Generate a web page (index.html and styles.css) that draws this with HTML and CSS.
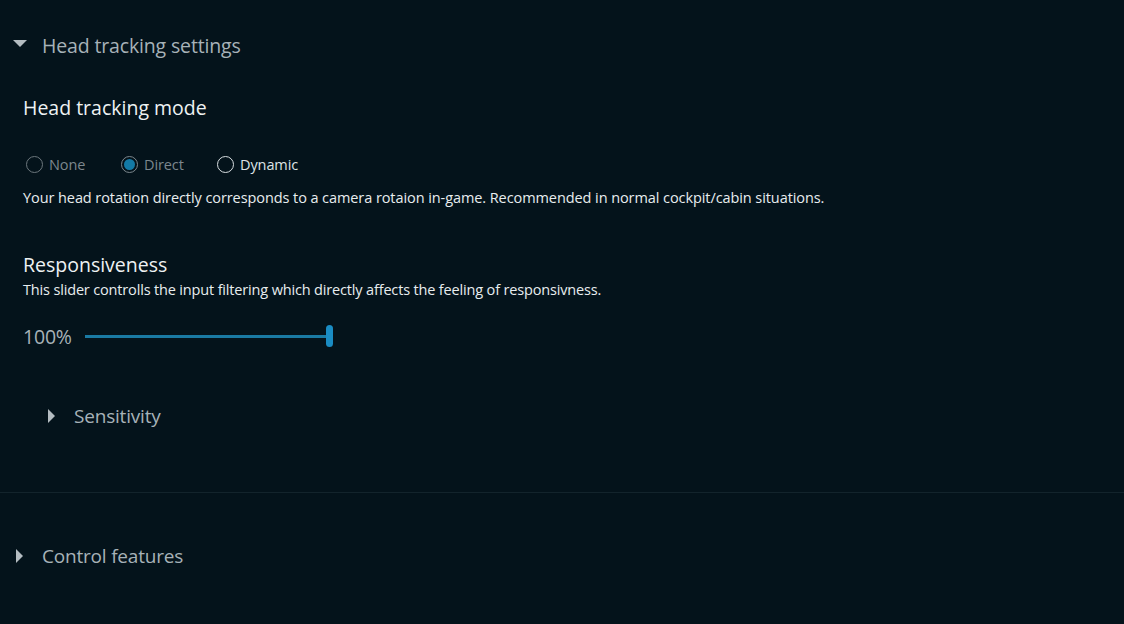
FILE: index.html
```html
<!DOCTYPE html>
<html>
<head>
<meta charset="utf-8">
<link rel="stylesheet" href="styles.css">
</head>
<body>
<div class="page">
  <section class="group">
    <div class="expander">
      <span class="tri tri-down"></span>
      <span class="exp-title">Head tracking settings</span>
    </div>
    <div class="content">
      <h2 class="heading mode-heading">Head tracking mode</h2>
      <div class="radios">
        <label class="radio disabled"><span class="circle"></span><span>None</span></label>
        <label class="radio disabled checked"><span class="circle"><span class="dot"></span></span><span>Direct</span></label>
        <label class="radio"><span class="circle"></span><span>Dynamic</span></label>
      </div>
      <p class="desc">Your head rotation directly corresponds to a camera rotaion in-game. Recommended in normal cockpit/cabin situations.</p>
      <h2 class="heading resp-heading">Responsiveness</h2>
      <p class="desc small">This slider controlls the input filtering which directly affects the feeling of responsivness.</p>
      <div class="slider-row">
        <span class="value">100%</span>
        <div class="slider">
          <div class="track"></div>
          <div class="thumb"></div>
        </div>
      </div>
      <div class="expander sub">
        <span class="tri tri-right"></span>
        <span class="exp-title">Sensitivity</span>
      </div>
    </div>
  </section>
  <div class="separator"></div>
  <section class="group">
    <div class="expander collapsed">
      <span class="tri tri-right"></span>
      <span class="exp-title">Control features</span>
    </div>
  </section>
</div>
</body>
</html>
```

FILE: styles.css
```css
html, body {
  margin: 0;
  padding: 0;
  background: #04131b;
  height: 100%;
}
body {
  font-family: "Open Sans", "Noto Sans", sans-serif;
  color: #e4eaec;
  overflow: hidden;
}
.page {
  display: flex;
  flex-direction: column;
}
.expander {
  display: flex;
  align-items: center;
  height: 30px;
  margin-top: 30px;
  padding-left: 13px;
}
.exp-title {
  font-size: 19.5px;
  color: #a7b2b8;
  letter-spacing: -0.15px;
}
.tri {
  display: inline-block;
  width: 0;
  height: 0;
}
.tri-down {
  border-left: 7px solid transparent;
  border-right: 7px solid transparent;
  border-top: 7px solid #b4bcc1;
  margin-right: 15px;
  margin-top: -4px;
}
.tri-right {
  border-top: 7px solid transparent;
  border-bottom: 7px solid transparent;
  border-left: 7px solid #b4bcc1;
  margin-left: 3px;
  margin-right: 19px;
}
.content {
  padding-left: 23px;
  display: flex;
  flex-direction: column;
}
.heading {
  font-weight: 400;
  font-size: 19.5px;
  color: #eef2f3;
  margin: 0;
  letter-spacing: 0;
}
.mode-heading {
  margin-top: 34px;
  line-height: 28px;
}
.radios {
  display: flex;
  margin-top: 30px;
  height: 24px;
  align-items: center;
}
.radio {
  display: flex;
  align-items: center;
  font-size: 14.5px;
  color: #dde3e6;
  letter-spacing: -0.1px;
}
.radio.disabled {
  color: #7c878d;
}
.radio:nth-child(1) { width: 95px; }
.radio:nth-child(2) { width: 96px; }
.circle {
  width: 15px;
  height: 15px;
  border: 1.5px solid #d8dee1;
  border-radius: 50%;
  margin-left: 3px;
  margin-right: 6px;
  display: flex;
  align-items: center;
  justify-content: center;
}
.radio.disabled .circle {
  border-color: #6c777d;
}
.radio.checked .circle {
  border-color: #7c878d;
}
.dot {
  width: 11px;
  height: 11px;
  border-radius: 50%;
  background: #137aa6;
}
.desc {
  margin: 0;
  margin-top: 12px;
  font-size: 14.5px;
  line-height: 20px;
  color: #e8edef;
  letter-spacing: -0.08px;
}
.resp-heading {
  margin-top: 44px;
  line-height: 26px;
}
.desc.small {
  margin-top: 2px;
  font-size: 14.5px;
  letter-spacing: -0.16px;
}
.slider-row {
  display: flex;
  align-items: center;
  margin-top: 23px;
  height: 26px;
}
.value {
  font-size: 19.5px;
  color: #a7b2b8;
  width: 62px;
  letter-spacing: -0.2px;
}
.slider {
  position: relative;
  width: 248px;
  height: 24px;
  display: flex;
  align-items: center;
}
.track {
  width: 245px;
  height: 3px;
  background: #1a7aa3;
}
.thumb {
  position: absolute;
  left: 241px;
  top: 1px;
  width: 7px;
  height: 22px;
  border-radius: 4px;
  background: #1a8cc3;
}
.expander.sub {
  margin-top: 52px;
  padding-left: 22px;
}
.expander.sub .exp-title,
.expander.collapsed .exp-title {
  font-size: 19px;
  letter-spacing: -0.2px;
}
.separator {
  height: 1px;
  background: #13242c;
  margin-top: 61px;
}
.expander.collapsed {
  margin-top: 48px;
  padding-left: 13px;
}
```
